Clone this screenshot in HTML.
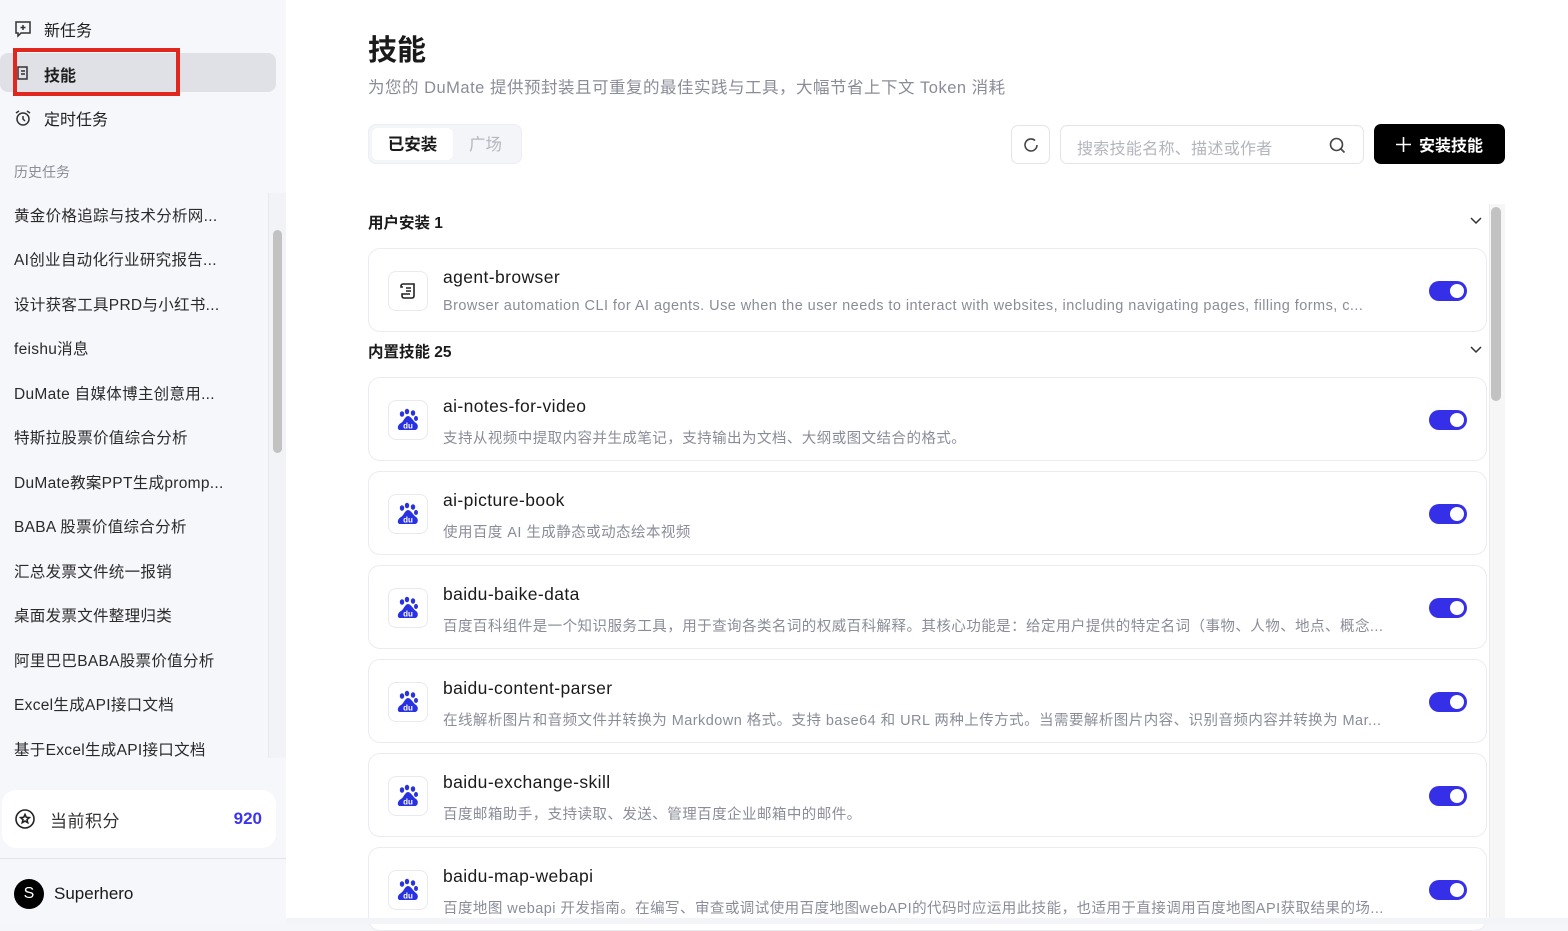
<!DOCTYPE html>
<html><head><meta charset="utf-8"><style>
*{box-sizing:border-box;margin:0;padding:0}
body{width:1568px;height:924px;overflow:hidden;background:#f5f6f9;font-family:"Liberation Sans","Noto Sans CJK SC",sans-serif;position:relative;color:#1a1a1a}
.side{position:absolute;left:0;top:0;width:286px;height:924px;background:#f6f7fb}
.nav{position:absolute;left:14px;font-size:16px;color:#1f1f1f;display:flex;align-items:center;gap:12px}
.sel{position:absolute;left:0;top:53px;width:276px;height:39px;background:#dfe1e6;border-radius:8px}
.red{position:absolute;left:13px;top:48px;width:167px;height:48px;border:4px solid #e0261d}
.hist{position:absolute;left:14px;top:162px;font-size:14px;color:#8a8d95}
.hi{position:absolute;left:14px;font-size:15.5px;color:#2a2a2a;letter-spacing:0.3px}
.strack{position:absolute;left:268px;top:193px;width:18px;height:565px;background:#f2f3f6;border-left:1px solid #e8e9ec}
.sthumb{position:absolute;left:273px;top:230px;width:9px;height:223px;background:#c2c2c2;border-radius:5px}
.pts{position:absolute;left:2px;top:790px;width:274px;height:58px;background:#fff;border-radius:14px;display:flex;align-items:center;padding:0 12px}
.main{position:absolute;left:286px;top:0;width:1282px;height:918px;background:#fff}
h1{position:absolute;left:368px;top:27px;font-size:29px;font-weight:bold}
.sub{position:absolute;left:368px;top:74px;font-size:16.5px;color:#8a8d99;letter-spacing:0.5px}
.tabs{position:absolute;left:368px;top:124px;width:154px;height:40px;background:#f4f5f9;border:1px solid #eceef2;border-radius:8px}
.tab1{position:absolute;left:3px;top:3px;width:81px;height:32px;background:#fff;border-radius:6px;font-size:16.5px;font-weight:bold;text-align:center;line-height:34px}
.tab2{position:absolute;left:100px;top:3px;font-size:16.5px;color:#b5b7bd;line-height:34px}
.card{position:absolute;left:368px;width:1119px;height:84px;border:1px solid #ebecf0;border-radius:12px;background:#fff}
.ic{position:absolute;left:19px;top:22px;width:40px;height:40px;border:1px solid #e9eaee;border-radius:8px;display:flex;align-items:center;justify-content:center}
.t{position:absolute;left:74px;top:18px;font-size:17.5px;color:#1a1a1a;letter-spacing:0.4px}
.d{position:absolute;left:74px;top:49px;font-size:14.5px;color:#8a8d99;white-space:nowrap;letter-spacing:0.45px}
.tg{position:absolute;left:1060px;top:32px;width:38px;height:20px;background:#3530e8;border-radius:10px}
.tg:after{content:"";position:absolute;right:3px;top:3px;width:14px;height:14px;background:#fff;border-radius:50%}
.sec{position:absolute;left:368px;font-size:15.5px;font-weight:bold;color:#1a1a1a}
.chev{position:absolute;left:1470px;width:12px;height:8px}
</style></head><body>
<div class="side">
 <div class="sel"></div>
 <div class="nav" style="top:17px"><svg width="18" height="18" viewBox="0 0 18 18" fill="none" stroke="#333" stroke-width="1.5"><path d="M2 2h14v11H7l-3 3v-3H2z"/><path d="M9 5v5M6.5 7.5h5"/></svg>新任务</div>
 <div class="nav" style="top:62px;font-weight:bold"><svg width="18" height="18" viewBox="0 0 18 18" fill="none" stroke="#333" stroke-width="1.5"><path d="M4 2h9v12H4z"/><path d="M7 6h4M7 9h4"/></svg>技能</div>
 <div class="red"></div>
 <div class="nav" style="top:106px"><svg width="18" height="18" viewBox="0 0 18 18" fill="none" stroke="#333" stroke-width="1.5"><circle cx="9" cy="10" r="6"/><path d="M9 7v3l2 2M2 4l3-2M16 4l-3-2"/></svg>定时任务</div>
 <div class="hist">历史任务</div>
 <div class="hi" style="top:204px">黄金价格追踪与技术分析网...</div>
 <div class="hi" style="top:248px">AI创业自动化行业研究报告...</div>
 <div class="hi" style="top:293px">设计获客工具PRD与小红书...</div>
 <div class="hi" style="top:337px">feishu消息</div>
 <div class="hi" style="top:382px">DuMate 自媒体博主创意用...</div>
 <div class="hi" style="top:426px">特斯拉股票价值综合分析</div>
 <div class="hi" style="top:471px">DuMate教案PPT生成promp...</div>
 <div class="hi" style="top:515px">BABA 股票价值综合分析</div>
 <div class="hi" style="top:560px">汇总发票文件统一报销</div>
 <div class="hi" style="top:604px">桌面发票文件整理归类</div>
 <div class="hi" style="top:649px">阿里巴巴BABA股票价值分析</div>
 <div class="hi" style="top:693px">Excel生成API接口文档</div>
 <div class="hi" style="top:738px">基于Excel生成API接口文档</div>
 <div class="strack"></div><div class="sthumb"></div>
 <div class="pts"><svg width="22" height="22" viewBox="0 0 22 22" fill="none" stroke="#222" stroke-width="1.6"><circle cx="11" cy="11" r="9"/><path d="M11 6.5l1.3 2.8 3 .3-2.3 2 .7 3-2.7-1.6-2.7 1.6.7-3-2.3-2 3-.3z"/></svg><span style="margin-left:14px;font-size:17px;color:#333;letter-spacing:0.5px">当前积分</span><span style="margin-left:auto;margin-right:2px;font-size:17px;font-weight:bold;color:#3a35ef">920</span></div>
 <div style="position:absolute;left:0;top:858px;width:286px;border-top:1px solid #e3e4e8"></div>
 <div style="position:absolute;left:14px;top:879px;width:30px;height:30px;border-radius:50%;background:#000;color:#fff;font-size:16px;text-align:center;line-height:30px">S</div>
 <div style="position:absolute;left:54px;top:884px;font-size:17px">Superhero</div>
</div>
<div class="main"></div>
<h1>技能</h1>
<div class="sub">为您的 DuMate 提供预封装且可重复的最佳实践与工具，大幅节省上下文 Token 消耗</div>
<div class="tabs"><div class="tab1">已安装</div><div class="tab2">广场</div></div>
<div style="position:absolute;left:1011px;top:125px;width:39px;height:39px;border:1px solid #e3e4e9;border-radius:7px;display:flex;align-items:center;justify-content:center"><svg width="18" height="18" viewBox="0 0 18 18" fill="none" stroke="#444" stroke-width="1.6"><path d="M15 9a6 6 0 1 1-2-4.5"/></svg></div>
<div style="position:absolute;left:1060px;top:125px;width:304px;height:39px;border:1px solid #e3e4e9;border-radius:7px"><span style="position:absolute;left:16px;top:9px;font-size:16px;color:#b3b5bd;letter-spacing:0.3px">搜索技能名称、描述或作者</span><svg style="position:absolute;left:268px;top:11px" width="17" height="17" viewBox="0 0 17 17" fill="none" stroke="#444" stroke-width="1.6"><circle cx="7.5" cy="7.5" r="6"/><path d="M12 12l3.5 3.5"/></svg></div>
<div style="position:absolute;left:1374px;top:124px;width:131px;height:40px;background:#000;border-radius:7px;color:#fff;font-size:16px;font-weight:bold;display:flex;align-items:center;justify-content:center;gap:8px"><svg width="15" height="15" viewBox="0 0 15 15" stroke="#fff" stroke-width="1.6"><path d="M7.5 0v15M0 7.5h15"/></svg>安装技能</div>
<div style="position:absolute;left:1489px;top:204px;width:16px;height:714px;background:#f6f6f7;border-left:1px solid #ececee"></div>
<div style="position:absolute;left:1491px;top:207px;width:10px;height:194px;background:#c2c2c2;border-radius:5px"></div>
<div class="sec" style="top:211px">用户安装 1</div>
<svg class="chev" style="top:217px" viewBox="0 0 12 8" fill="none" stroke="#333" stroke-width="1.5"><path d="M1 1l5 5 5-5"/></svg>
<div class="card" style="top:248px"><div class="ic"><svg width="20" height="20" viewBox="0 0 20 20" fill="none" stroke="#222" stroke-width="1.6"><path d="M5 3h11v12a2 2 0 0 1-2 2H6a2 2 0 0 1-2-2v-2h8"/><path d="M5 3a2 2 0 0 0-2 2v1h2M8 7h5M8 10h5"/></svg></div><div class="t">agent-browser</div><div class="d">Browser automation CLI for AI agents. Use when the user needs to interact with websites, including navigating pages, filling forms, c...</div><div class="tg"></div></div>
<div class="sec" style="top:340px">内置技能 25</div>
<svg class="chev" style="top:346px" viewBox="0 0 12 8" fill="none" stroke="#333" stroke-width="1.5"><path d="M1 1l5 5 5-5"/></svg>
<svg width="0" height="0" style="position:absolute"><defs><symbol id="du" viewBox="0 0 24 24"><g fill="#2932e1"><ellipse cx="6" cy="6" rx="2.2" ry="2.8"/><ellipse cx="11" cy="3.5" rx="2.2" ry="2.8"/><ellipse cx="17" cy="5" rx="2.2" ry="2.8"/><ellipse cx="20" cy="10.5" rx="2" ry="2.5"/><path d="M4 22c-3 0-3-5 1-7 3-2 4-7 7-7s5 5 8 7c3 2 2 7-1 7z"/></g><text x="12" y="20.5" font-size="8" font-weight="bold" fill="#fff" text-anchor="middle" font-family="Liberation Sans">du</text></symbol></defs></svg>
<div class="card" style="top:377px"><div class="ic"><svg width="24" height="24"><use href="#du"/></svg></div><div class="t">ai-notes-for-video</div><div class="d">支持从视频中提取内容并生成笔记，支持输出为文档、大纲或图文结合的格式。</div><div class="tg"></div></div>
<div class="card" style="top:471px"><div class="ic"><svg width="24" height="24"><use href="#du"/></svg></div><div class="t">ai-picture-book</div><div class="d">使用百度 AI 生成静态或动态绘本视频</div><div class="tg"></div></div>
<div class="card" style="top:565px"><div class="ic"><svg width="24" height="24"><use href="#du"/></svg></div><div class="t">baidu-baike-data</div><div class="d">百度百科组件是一个知识服务工具，用于查询各类名词的权威百科解释。其核心功能是：给定用户提供的特定名词（事物、人物、地点、概念...</div><div class="tg"></div></div>
<div class="card" style="top:659px"><div class="ic"><svg width="24" height="24"><use href="#du"/></svg></div><div class="t">baidu-content-parser</div><div class="d">在线解析图片和音频文件并转换为 Markdown 格式。支持 base64 和 URL 两种上传方式。当需要解析图片内容、识别音频内容并转换为 Mar...</div><div class="tg"></div></div>
<div class="card" style="top:753px"><div class="ic"><svg width="24" height="24"><use href="#du"/></svg></div><div class="t">baidu-exchange-skill</div><div class="d">百度邮箱助手，支持读取、发送、管理百度企业邮箱中的邮件。</div><div class="tg"></div></div>
<div class="card" style="top:847px"><div class="ic"><svg width="24" height="24"><use href="#du"/></svg></div><div class="t">baidu-map-webapi</div><div class="d">百度地图 webapi 开发指南。在编写、审查或调试使用百度地图webAPI的代码时应运用此技能，也适用于直接调用百度地图API获取结果的场...</div><div class="tg"></div></div>
<div style="position:absolute;left:286px;top:918px;width:1282px;height:6px;background:#f3f4f7"></div>
</body></html>
